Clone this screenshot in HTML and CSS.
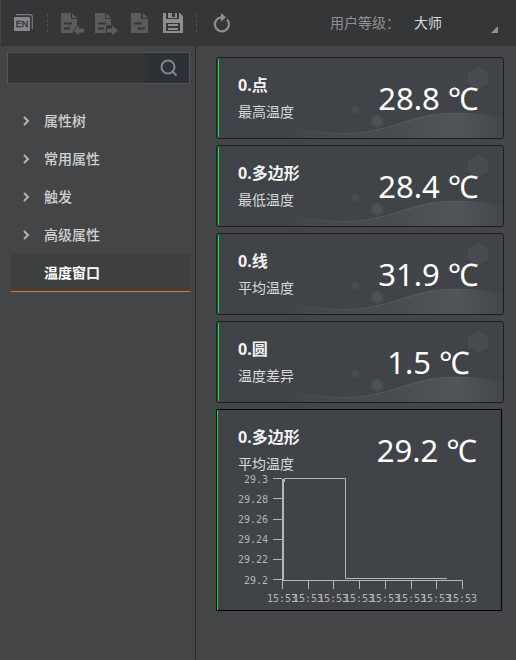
FILE: index.html
```html
<!DOCTYPE html>
<html lang="zh-CN">
<head>
<meta charset="utf-8">
<title>温度窗口</title>
<link rel="stylesheet" href="styles.css">
</head>
<body>
<svg class="defs" aria-hidden="true">
  <defs>
    <linearGradient id="wave-fill" x1="0" x2="1" y1="0" y2="0">
      <stop offset="0" stop-color="#4c4f53" stop-opacity="0"/>
      <stop offset=".5" stop-color="#484b4f"/>
      <stop offset=".8" stop-color="#515458"/>
      <stop offset="1" stop-color="#43464a"/>
    </linearGradient>
    <linearGradient id="wave-line" x1="0" x2="1" y1="0" y2="0">
      <stop offset="0" stop-color="#5c5f63" stop-opacity="0"/>
      <stop offset=".65" stop-color="#5a5d61"/>
      <stop offset="1" stop-color="#5c5f63" stop-opacity="0"/>
    </linearGradient>
    <symbol id="wave" viewBox="0 0 284 80">
      <path d="M60 73C100 72 118 77 140 75C178 71 196 56 234 55C256 55 270 57 284 60V80H60Z" fill="url(#wave-fill)"/>
      <path d="M60 73C100 72 118 77 140 75C178 71 196 56 234 55C256 55 270 57 284 60" fill="none" stroke="url(#wave-line)"/>
      <path d="M260 9l10 5.500v11L260 31l-10-5.500v-11z" fill="#484b4f"/>
      <path d="M159 56l6 3.500v7L159 70l-6-3.500v-7z" fill="#4b4e52"/>
      <circle cx="159" cy="63" r="3" fill="#505357"/>
      <circle cx="137" cy="52" r="4" fill="#484b4f"/>
    </symbol>
  </defs>
</svg>

<header class="toolbar">
  <button class="tool tool-lang" aria-label="EN">
    <svg width="20" height="18" viewBox="0 0 20 18"><path d="M2 .7H16Q18.300 .7 18.300 3V15" fill="none" stroke="#77797b" stroke-width="1.200"/><rect y="3" width="16" height="14" rx="1" fill="#85878a"/><text x="8" y="13" class="lang-text">EN</text></svg>
  </button>
  <span class="divider"></span>
  <button class="tool tool-import" aria-label="导入">
    <svg width="24" height="20" viewBox="0 0 24 20"><path d="M0 0h10v6h6v7l-4 4v3H0z" fill="#595b5d"/><path d="M11 0l5 5h-5z" fill="#595b5d"/><path d="M3 10.500h8M3 15.500h6" stroke="#353638" stroke-width="2"/><path d="M12 17.500l6-5v3h5v4h-5v3z" fill="#595b5d"/></svg>
  </button>
  <button class="tool tool-export" aria-label="导出">
    <svg width="24" height="20" viewBox="0 0 24 20"><path d="M0 0h10v6h6v6h-5v8H0z" fill="#595b5d"/><path d="M11 0l5 5h-5z" fill="#595b5d"/><path d="M3 10.500h8M3 15.500h6" stroke="#353638" stroke-width="2"/><path d="M23 17.500l-6-5v3h-5v4h5v3z" fill="#595b5d"/></svg>
  </button>
  <button class="tool tool-file" aria-label="文件">
    <svg width="18" height="20" viewBox="0 0 18 20"><path d="M0 0h10v6h7v14H0z" fill="#595b5d"/><path d="M12 0l5 5h-5z" fill="#595b5d"/><path d="M3 10.500h8M6 15.500h8" stroke="#353638" stroke-width="2"/></svg>
  </button>
  <button class="tool tool-save" aria-label="保存">
    <svg width="20" height="20" viewBox="0 0 20 20"><path fill-rule="evenodd" d="M0 0h3v6h13V0h1l3 3v17H0zM3 10v8h14v-8z" fill="#8c8e90"/><path d="M5 0h4v4h3V0h2v5H5zM5 11h10v2H5zM5 15h10v2H5z" fill="#8c8e90"/></svg>
  </button>
  <span class="divider"></span>
  <button class="tool tool-refresh" aria-label="刷新">
    <svg width="18" height="20" viewBox="0 0 18 20"><path d="M14 6.500A7 7 0 1 1 9 4.300" fill="none" stroke="#8c8e90" stroke-width="2.200"/><path d="M8 0l5 4.300-5 4.500z" fill="#8c8e90"/></svg>
  </button>
  <label class="level-label" for="level">用户等级：</label>
  <span class="level">
    <select id="level"><option>大师</option></select>
    <span class="corner"></span>
  </span>
</header>

<div class="workspace">
  <aside class="sidebar">
    <form class="search">
      <input type="search" aria-label="搜索">
      <button type="button" aria-label="搜索">
        <svg width="18" height="18" viewBox="0 0 18 18" fill="none" stroke="#85878b" stroke-width="2"><circle cx="8" cy="8" r="6.500"/><path d="M12 12l4.500 4.500"/></svg>
      </button>
    </form>
    <nav class="tree">
      <a href="#"><svg class="chevron" viewBox="0 0 8 10"><path d="M2 1l4 4-4 4"/></svg>属性树</a>
      <a href="#"><svg class="chevron" viewBox="0 0 8 10"><path d="M2 1l4 4-4 4"/></svg>常用属性</a>
      <a href="#"><svg class="chevron" viewBox="0 0 8 10"><path d="M2 1l4 4-4 4"/></svg>触发</a>
      <a href="#"><svg class="chevron" viewBox="0 0 8 10"><path d="M2 1l4 4-4 4"/></svg>高级属性</a>
      <a href="#" class="active">温度窗口</a>
    </nav>
  </aside>

  <main class="cards">
    <section class="card">
      <svg class="backdrop" aria-hidden="true"><use href="#wave"/></svg>
      <div class="reading"><div class="names"><h2>0.点</h2><p>最高温度</p></div><output>28.8 ℃</output></div>
    </section>
    <section class="card">
      <svg class="backdrop" aria-hidden="true"><use href="#wave"/></svg>
      <div class="reading"><div class="names"><h2>0.多边形</h2><p>最低温度</p></div><output>28.4 ℃</output></div>
    </section>
    <section class="card">
      <svg class="backdrop" aria-hidden="true"><use href="#wave"/></svg>
      <div class="reading"><div class="names"><h2>0.线</h2><p>平均温度</p></div><output>31.9 ℃</output></div>
    </section>
    <section class="card">
      <svg class="backdrop" aria-hidden="true"><use href="#wave"/></svg>
      <div class="reading"><div class="names"><h2>0.圆</h2><p>温度差异</p></div><output>1.5 ℃</output></div>
    </section>
    <section class="card card-chart">
      <div class="reading"><div class="names"><h2>0.多边形</h2><p>平均温度</p></div><output>29.2 ℃</output></div>
      <svg class="chart" viewBox="0 0 284 140" role="img" aria-label="平均温度">
        <g class="y-labels">
          <text x="51" y="13">29.3</text><text x="51" y="33">29.28</text><text x="51" y="53">29.26</text>
          <text x="51" y="73">29.24</text><text x="51" y="93">29.22</text><text x="51" y="114">29.2</text>
        </g>
        <path class="axis-y" d="M66 9V110"/>
        <path class="line" d="M56 8.500h9M56 28.500h9M56 49.500h9M56 69.500h9M56 89.500h9M56 109.500h9"/>
        <path class="line" d="M65.500 110.500H245.500V119M91.500 110V119M116.500 110V119M142.500 110V119M168.500 110V119M194.500 110V119M219.500 110V119M65.500 110V119"/>
        <path class="line" d="M67.500 12V8.500H128.500V108.500H230"/>
        <g class="x-labels">
          <text x="65" y="132">15:53</text><text x="91" y="132">15:53</text><text x="116" y="132">15:53</text><text x="142" y="132">15:53</text>
          <text x="168" y="132">15:53</text><text x="194" y="132">15:53</text><text x="219" y="132">15:53</text><text x="245" y="132">15:53</text>
        </g>
      </svg>
    </section>
  </main>
</div>
</body>
</html>
```

FILE: styles.css
```css
* {
  box-sizing: border-box;
}

body {
  margin: 0;
  min-height: 100vh;
  display: flex;
  flex-direction: column;
  background: #444547;
  color: #d8d9da;
  font: 14px/20px "Noto Sans", "Noto Sans CJK SC", sans-serif;
}

.defs {
  position: absolute;
  width: 0;
  height: 0;
}

button,
select,
input {
  margin: 0;
  padding: 0;
  border: 0;
  background: none;
  color: inherit;
  font: inherit;
}

svg {
  display: block;
}

.toolbar {
  display: flex;
  align-items: center;
  height: 46px;
  padding: 0 16px 0 13px;
  background: #353638;
  border-left: 1px solid #444547;
}

.tool {
  flex: none;
}

.tool-lang {
  margin-right: 13px;
}

.lang-text {
  font: 9px "Liberation Sans", sans-serif;
  text-anchor: middle;
  fill: #303133;
  stroke: #303133;
  stroke-width: 0.3px;
}

.divider {
  height: 18px;
  border-left: 1px dashed #4c4e50;
}

.tool-import {
  margin-left: 13px;
  margin-right: 10px;
}

.tool-import svg,
.tool-export svg {
  overflow: visible;
}

.tool-export {
  margin-right: 12px;
}

.tool-file {
  margin-right: 14px;
}

.tool-save {
  margin-right: 13px;
}

.tool-refresh {
  margin-left: 16px;
}

.level-label {
  margin-left: auto;
  color: #8f9193;
}

.level {
  display: flex;
  align-items: center;
  width: 84px;
  margin-left: 14px;
  margin-right: 2px;
}

.level select {
  flex: 1;
  min-width: 0;
  appearance: none;
}

.corner {
  align-self: flex-end;
  border-left: 7px solid transparent;
  border-bottom: 7px solid #8f9193;
}

.workspace {
  flex: 1;
  display: flex;
}

.sidebar {
  flex: none;
  width: 196px;
  padding: 6px 5px 0 7px;
  border-right: 1px solid #2b2c2e;
}

.search {
  display: flex;
  height: 32px;
  border: 1px solid #525355;
  background: #323335;
}

.search input {
  flex: 1;
  min-width: 0;
  outline: 0;
}

.search button {
  width: 42px;
  padding-left: 13px;
  background: #2e3038;
}

.tree {
  display: flex;
  flex-direction: column;
  margin: 18px 0 0 4px;
}

.tree a {
  display: flex;
  align-items: center;
  height: 38px;
  padding-left: 11px;
  color: #cfd0d1;
  font-weight: 500;
  text-decoration: none;
}

.chevron {
  width: 8px;
  height: 10px;
  margin-right: 14px;
  fill: none;
  stroke: #b2b3b4;
  stroke-width: 2;
}

.tree .active {
  padding-left: 33px;
  border-bottom: 1px solid #e07a1c;
  background: #3e403f;
  color: #fff;
  font-weight: 700;
}

.cards {
  flex: 1;
  min-width: 0;
  display: flex;
  flex-direction: column;
  gap: 6px;
  padding: 11px 12px 12px 20px;
}

.card {
  position: relative;
  border: 1px solid #1c1d1f;
  border-radius: 3px;
  background: #404347;
}

.card::before {
  content: "";
  position: absolute;
  inset: 1px auto 1px 1px;
  width: 1px;
  background: #00e83c;
}

.card-chart::before {
  inset: 0 auto 0 0;
}

.backdrop {
  position: absolute;
  inset: 0;
  width: 100%;
  height: 100%;
}

.reading {
  position: relative;
  display: grid;
  grid-template-columns: 1fr 1fr;
  align-items: center;
  height: 80px;
  padding-right: 4px;
}

.names {
  padding-left: 21px;
}

h2,
p {
  margin: 0;
}

h2 {
  margin-bottom: 6px;
  color: #f0f1f2;
  font-size: 16px;
  line-height: 22px;
}

output {
  color: #fff;
  font-size: 31px;
  line-height: 40px;
  text-align: center;
  white-space: nowrap;
}

.card-chart {
  margin-right: 2px;
  border-color: #000;
  border-radius: 1px;
}

.chart {
  width: 100%;
  margin-top: -20px;
}

.chart text {
  font: 10px "DejaVu Sans Mono", monospace;
  fill: #b4b5b7;
}

.y-labels {
  text-anchor: end;
}

.x-labels {
  text-anchor: middle;
}

.line,
.axis-y {
  fill: none;
  stroke: #b4b5b7;
  stroke-width: 1;
}

.axis-y {
  stroke-width: 2;
}
```
